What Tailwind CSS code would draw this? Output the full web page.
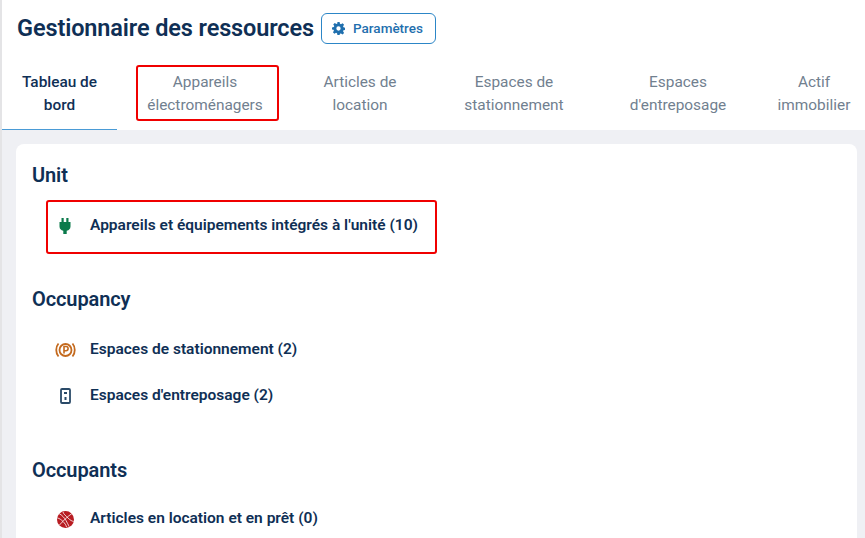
<!DOCTYPE html>
<html lang="fr">
<head>
    <meta charset="UTF-8">
    <title>Gestionnaire des ressources</title>
    <script src="https://cdn.jsdelivr.net/npm/@tailwindcss/browser@4"></script>
</head>
<body class="h-[538px] w-[865px] overflow-hidden bg-white font-['Roboto',sans-serif] text-[#0f2f55]">
    <div class="border-l-2 border-[#e4e4e6]">

        <!-- Header -->
        <header class="flex h-[65px] items-start pl-[15px] pt-[13px]">
            <h1 class="text-[23.500px] leading-[31px] font-semibold tracking-[-0.12px]">Gestionnaire des ressources</h1>
            <button class="ml-[7px] flex h-[31px] w-[115px] items-center rounded-md border border-[#2c86c7] pl-[10px] text-[13.500px] font-medium text-[#1f6fae]">
                <svg class="mr-[8px] h-[13px] w-[13px]" viewBox="0 0 24 24" fill="#1f6fae"><path fill-rule="evenodd" d="M10 0h4l.7 3.400 1.900.8 2.900-1.900 2.800 2.800-1.900 2.900.8 1.900 3.400.7v4l-3.400.7-.8 1.900 1.900 2.900-2.800 2.800-2.900-1.900-1.900.8L14 24h-4l-.7-3.400-1.900-.8-2.900 1.900-2.800-2.800 1.900-2.900-.8-1.900L0 14v-4l3.400-.7.8-1.900-1.900-2.900 2.800-2.800 2.900 1.900 1.900-.8zM12 8a4 4 0 1 0 0 8 4 4 0 0 0 0-8z"/></svg>
                Paramètres
            </button>
        </header>

        <!-- Tabs -->
        <nav class="flex h-[65px] w-[863px] overflow-hidden text-center text-[15.400px] leading-[23px] text-[#71808f]">
            <a class="h-[65px] w-[115px] shrink-0 border-b border-[#4a9bd6] pt-[6px] font-medium text-[#0f2f55]">Tableau de<br>bord</a>
            <a class="relative h-[65px] w-[176px] shrink-0 pt-[6px]">
                Appareils<br>électroménagers
                <span class="absolute left-[19px] top-0 h-[56px] w-[143px] rounded-[3px] border-2 border-[#f00000]"></span>
            </a>
            <a class="h-[65px] w-[134px] shrink-0 pt-[6px]">Articles de<br>location</a>
            <a class="h-[65px] w-[174px] shrink-0 pt-[6px]">Espaces de<br>stationnement</a>
            <a class="h-[65px] w-[154px] shrink-0 pt-[6px]">Espaces<br>d'entreposage</a>
            <a class="h-[65px] w-[118px] shrink-0 pt-[6px]">Actif<br>immobilier</a>
        </nav>
    </div>

    <!-- Content -->
    <main class="h-[408px] border-l-2 border-[#e4e4e6] bg-[#eff0f4] pl-[14px] pr-[8px] pt-[14px]">
        <section class="h-[420px] rounded-t-lg bg-white pl-[16px] pt-[19px]">

            <h2 class="text-[20px] leading-[24px] font-semibold tracking-[-0.1px]">Unit</h2>
            <div class="ml-[14px] mt-[13px] flex h-[54px] w-[391px] items-center rounded-[3px] border-2 border-[#f00000] pb-[2px] text-[15.500px] font-semibold">
                <span class="mr-[8px] flex w-[34px] shrink-0 justify-center">
                    <svg class="h-[16px] w-[12px]" viewBox="0 0 12 16" fill="#0b7a4b"><path d="M2.500 0h2.200v4h2.600V0h2.200v4H11.500v4.500a4.500 4.500 0 0 1-3.800 4.200V16H4.300v-3.300A4.500 4.500 0 0 1 .5 8.500V4h2z"/></svg>
                </span>
                Appareils et équipements intégrés à l'unité (10)
            </div>

            <h2 class="mt-[33px] text-[20px] leading-[24px] font-semibold tracking-[-0.1px]">Occupancy</h2>
            <div class="ml-[16px] mt-[16px] flex h-[46px] items-center text-[15.500px] font-semibold">
                <span class="mr-[8px] flex w-[34px] shrink-0 justify-center">
                    <svg class="h-[18px] w-[21px]" viewBox="0 0 21 18" fill="none" stroke="#c46a1e"><circle cx="10.500" cy="9" r="6" stroke-width="1.800"/><path d="M3.500 2.500c-3 3.500-3 9.500 0 13M17.500 2.500c3 3.500 3 9.500 0 13" stroke-width="1.800"/><path d="M9 12.500v-7h2a2 2 0 0 1 0 4.200H9" stroke-width="1.600"/></svg>
                </span>
                Espaces de stationnement (2)
            </div>
            <div class="ml-[16px] flex h-[46px] items-center text-[15.500px] font-semibold">
                <span class="mr-[8px] flex w-[34px] shrink-0 justify-center">
                    <svg class="h-[16px] w-[11px]" viewBox="0 0 11 16" fill="none"><rect x="1" y="1" width="9" height="14" rx="1" stroke="#2a4a68" stroke-width="1.800"/><rect x="4" y="4" width="3" height="2" fill="#2a4a68"/><rect x="4.500" y="9" width="2" height="3" fill="#2a4a68"/></svg>
                </span>
                Espaces d'entreposage (2)
            </div>

            <h2 class="mt-[39px] text-[20px] leading-[24px] font-semibold tracking-[-0.1px]">Occupants</h2>
            <div class="ml-[16px] mt-[14px] flex h-[46px] items-center text-[15.500px] font-semibold">
                <span class="mr-[8px] flex w-[34px] shrink-0 justify-center">
                    <svg class="h-[17px] w-[17px]" viewBox="0 0 17 17"><circle cx="8.500" cy="8.500" r="8.500" fill="#b81c22"/><path d="M2 2.500c3 1.500 6 5 7 7s2.500 4.500 3 6M15 2.500C11 5 6 10 2 14.500M6 1c.5 2 2.500 3.500 5 6s4 3 5.500 3.500M.5 7c2 .5 3.500 1.500 5.500 3.500s3 3.500 3.500 5.500" fill="none" stroke="#fff" stroke-width="0.800"/></svg>
                </span>
                Articles en location et en prêt (0)
            </div>
        </section>
    </main>
</body>
</html>
